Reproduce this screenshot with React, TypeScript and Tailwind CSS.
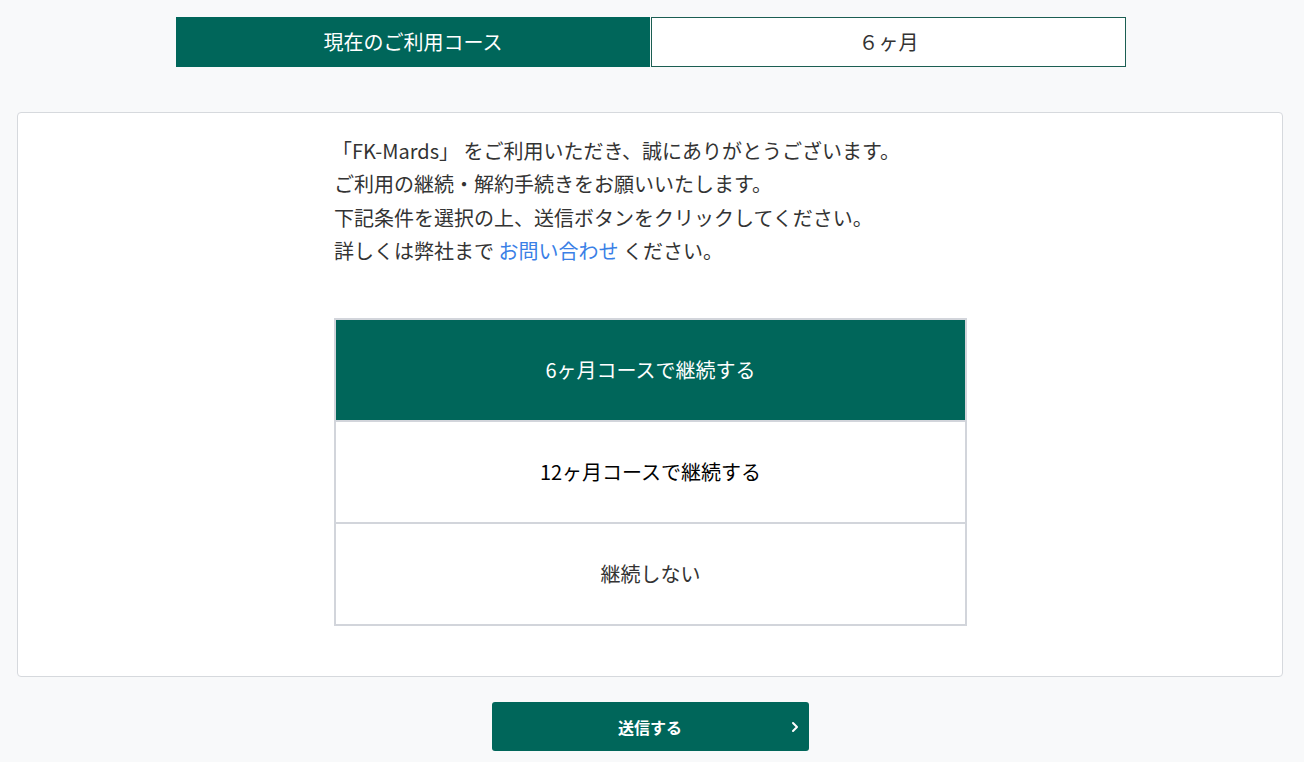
import { ChevronRight } from "lucide-react";

const font = {
  fontFamily: '"Noto Sans CJK JP", "Noto Sans", sans-serif',
};

const options = [
  { label: "6ヶ月コースで継続する", selected: true, tone: "text-white" },
  { label: "12ヶ月コースで継続する", selected: false, tone: "text-black" },
  { label: "継続しない", selected: false, tone: "text-[#333]" },
];

export default function App() {
  return (
    <div className="min-h-[762px] w-full bg-[#f8f9fa] text-[#333]" style={font}>
      <div className="w-[1300px] px-[17px] pt-[17px] pb-[10px]">
        {/* current course */}
        <div className="ml-[159px] flex w-[950px] gap-px">
          <div className="flex h-[50px] w-[474px] items-center justify-center bg-[#00665a] text-[20px] text-white">
            現在のご利用コース
          </div>
          <div className="flex h-[50px] flex-1 items-center justify-center border border-[#1b5e52] bg-white text-[20px] text-[#333]">
            ６ヶ月
          </div>
        </div>

        {/* card */}
        <div className="mt-[45px] rounded-[4px] border border-[#d6d9dd] bg-white pt-[21px] pb-[50px]">
          <div className="ml-[316px] w-[633px]">
            <div className="text-[20px] leading-[33.3px]">
              <p className="-ml-[2px]">「FK-Mards」 をご利用いただき、誠にありがとうございます。</p>
              <p>ご利用の継続・解約手続きをお願いいたします。</p>
              <p>下記条件を選択の上、送信ボタンをクリックしてください。</p>
              <p>
                詳しくは弊社まで <a className="text-[#3a80e6]">お問い合わせ</a> ください。
              </p>
            </div>

            <div className="mt-[51px] border-2 border-[#d2d5db]">
              {options.map((o, i) => (
                <div
                  key={o.label}
                  className={
                    "flex items-center justify-center text-[20px] " +
                    (i > 0 ? "h-[102px] border-t-2 border-[#d2d5db] " : "h-[100px] ") +
                    (o.selected ? "bg-[#00665a] " : "bg-white ") +
                    o.tone
                  }
                >
                  {o.label}
                </div>
              ))}
            </div>
          </div>
        </div>

        {/* submit */}
        <div className="mt-[25px] flex justify-center">
          <button
            type="button"
            className="relative flex h-[49px] w-[317px] items-center justify-center rounded-[3px] bg-[#00665a] text-[16px] font-bold text-white"
          >
            送信する
            <ChevronRight
              className="absolute right-[6px] top-1/2 h-4 w-4 -translate-y-1/2"
              strokeWidth={3}
            />
          </button>
        </div>
      </div>
    </div>
  );
}
